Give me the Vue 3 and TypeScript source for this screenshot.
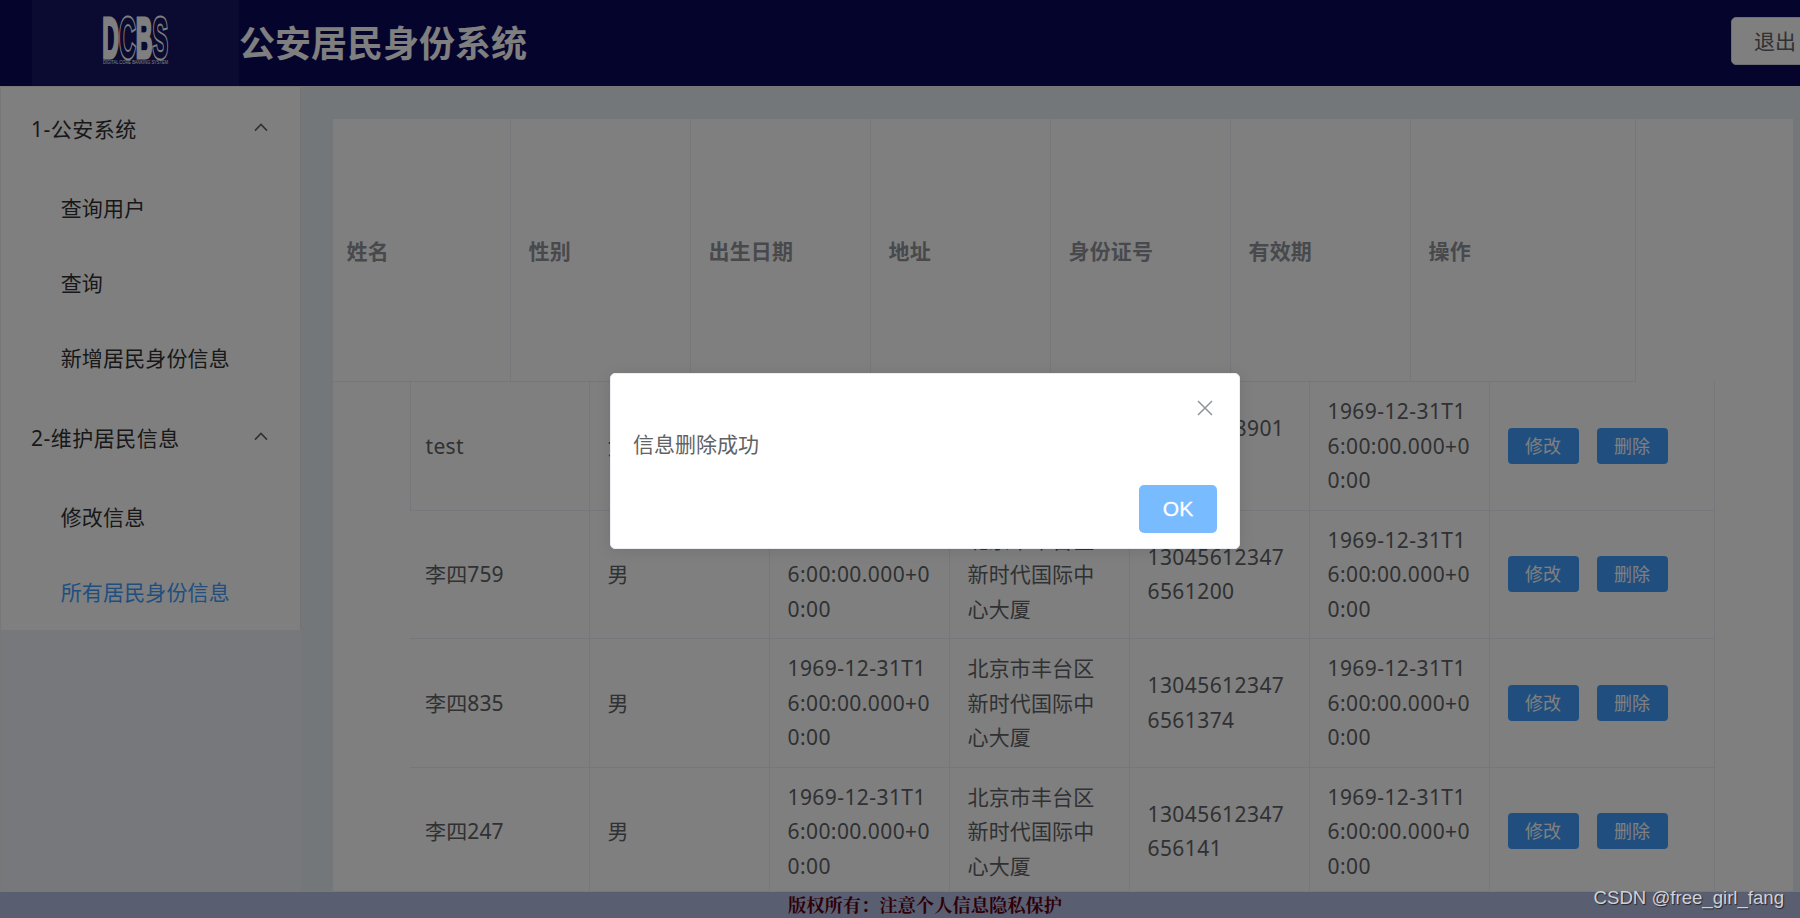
<script setup lang="ts">
interface MenuGroup {
  title: string
  items: string[]
}

interface Resident {
  name: string
  gender: string
  birth: string
  address: string
  idNumber: string
  expiry: string
}

interface Field {
  text: string
  numeric: boolean
}

const menu: MenuGroup[] = [
  { title: '1-公安系统', items: ['查询用户', '查询', '新增居民身份信息'] },
  { title: '2-维护居民信息', items: ['修改信息', '所有居民身份信息'] },
]
const activeItem = '所有居民身份信息'

const columns: string[] = ['姓名', '性别', '出生日期', '地址', '身份证号', '有效期', '操作']

const date = '1969-12-31T1\n6:00:00.000+0\n0:00'
const address = '北京市丰台区\n新时代国际中\n心大厦'

const residents: Resident[] = [
  { name: 'test', gender: '女', birth: date, address, idNumber: '13045678901\n123456', expiry: date },
  { name: '李四759', gender: '男', birth: date, address, idNumber: '13045612347\n6561200', expiry: date },
  { name: '李四835', gender: '男', birth: date, address, idNumber: '13045612347\n6561374', expiry: date },
  { name: '李四247', gender: '男', birth: date, address, idNumber: '13045612347\n656141', expiry: date },
]

const fieldsOf = (r: Resident): Field[] => [
  { text: r.name, numeric: false },
  { text: r.gender, numeric: false },
  { text: r.birth, numeric: true },
  { text: r.address, numeric: false },
  { text: r.idNumber, numeric: true },
  { text: r.expiry, numeric: true },
]
</script>

<template>
  <div class="viewport">
    <div class="page">
      <header class="topbar">
        <div class="logo">
          <svg width="70" height="52" viewBox="0 0 70 52">
            <text class="mark" transform="translate(0.2 43.6) scale(0.4 1)">
              <tspan class="solid">D</tspan><tspan class="outline">C</tspan><tspan class="solid">B</tspan><tspan class="outline">S</tspan>
            </text>
            <text class="tagline" x="1" y="50" textLength="65" lengthAdjust="spacingAndGlyphs">DIGITAL CORE BANKING SYSTEM</text>
          </svg>
        </div>
        <h1 class="title">公安居民身份系统</h1>
        <button class="logout">退出</button>
      </header>

      <div class="body">
        <aside class="aside">
          <nav class="menu">
            <section v-for="group in menu" :key="group.title">
              <div class="menu-title">
                <span class="menu-label">{{ group.title }}</span>
                <svg class="chevron" width="14" height="9" viewBox="0 0 14 9">
                  <path d="M1 7.6 L7 1.4 L13 7.6" />
                </svg>
              </div>
              <div
                v-for="item in group.items"
                :key="item"
                class="menu-item"
                :class="{ active: item === activeItem }"
              >
                {{ item }}
              </div>
            </section>
          </nav>
        </aside>

        <main class="main">
          <div class="panel">
            <div class="row head">
              <div v-for="column in columns" :key="column" class="cell">{{ column }}</div>
            </div>
            <div class="records">
              <div v-for="r in residents" :key="r.name" class="row">
                <div
                  v-for="(field, i) in fieldsOf(r)"
                  :key="i"
                  class="cell"
                  :class="{ numeric: field.numeric }"
                >{{ field.text }}</div>
                <div class="cell actions">
                  <button class="small-button">修改</button>
                  <button class="small-button">删除</button>
                </div>
              </div>
            </div>
          </div>
        </main>
      </div>

      <footer class="footer">版权所有：注意个人信息隐私保护</footer>

      <div class="mask">
        <div class="dialog">
          <svg class="close" width="16" height="16" viewBox="0 0 16 16">
            <path d="M1 1 L15 15 M15 1 L1 15" />
          </svg>
          <p class="message">信息删除成功</p>
          <button class="confirm">OK</button>
        </div>
      </div>
    </div>
    <div class="watermark">CSDN @free_girl_fang</div>
  </div>
</template>

<style>
body {
  margin: 0;
  overflow: hidden;
}
</style>

<style scoped>
.viewport {
  position: relative;
  width: 1800px;
  height: 918px;
  overflow: hidden;
  font-family: 'Noto Sans', 'Noto Sans CJK SC', sans-serif;
  font-size: 21px;
  font-weight: 400;
  color: #606266;
}

.page {
  position: relative;
  display: flex;
  flex-direction: column;
  width: 1850px;
  height: 918px;
}

button {
  box-sizing: border-box;
  margin: 0;
  padding: 0;
  border: 0;
  font-family: inherit;
}

.topbar {
  display: flex;
  flex: 0 0 86px;
  align-items: center;
  box-sizing: border-box;
  padding-left: 32px;
  background: #0b085a;
}

.logo {
  display: flex;
  align-items: center;
  box-sizing: border-box;
  width: 207px;
  height: 86px;
  padding: 0 0 6px 70px;
  background: #171460;
}

.logo svg {
  overflow: visible;
}

.mark {
  font-family: 'Liberation Sans', Arial, sans-serif;
  font-size: 58px;
  font-weight: 700;
  paint-order: stroke fill;
}

.solid {
  fill: #fff;
  stroke: #fff;
  stroke-width: 3px;
}

.outline {
  fill: #171460;
  stroke: #fff;
  stroke-width: 4px;
}

.tagline {
  font-family: 'Liberation Sans', Arial, sans-serif;
  font-size: 5px;
  fill: #fff;
}

.title {
  margin: 0 0 4px;
  font-family: 'Noto Sans CJK SC', sans-serif;
  font-size: 36px;
  font-weight: 700;
  line-height: 48px;
  color: #fff;
}

.logout {
  width: 88px;
  height: 48px;
  margin: 0 31px 4px auto;
  padding-bottom: 2px;
  border: 1px solid #dcdfe6;
  border-radius: 5px;
  background: #fff;
  font-size: 21px;
  color: #606266;
}

.body {
  display: flex;
  flex: 1;
  box-sizing: border-box;
  min-height: 0;
  border: 1px solid #eee;
  border-right: 0;
}

.aside {
  flex: 0 0 300px;
  background: #eef1f6;
}

.menu {
  box-sizing: border-box;
  border-right: 1px solid #e6e6e6;
  background: #fff;
  letter-spacing: 0.15px;
  color: #303133;
}

.menu-title {
  display: flex;
  align-items: center;
  justify-content: space-between;
  height: 84px;
  padding: 0 32px 0 30px;
}

.menu-label {
  margin-bottom: 2px;
  letter-spacing: 0.5px;
}

.chevron {
  margin-bottom: 3px;
}

.chevron path {
  fill: none;
  stroke: #606266;
  stroke-width: 1.6;
}

.menu-item {
  height: 75px;
  padding-left: 59.7px;
  line-height: 75px;
}

.menu-item.active {
  color: #409eff;
}

.main {
  flex: 1;
  box-sizing: border-box;
  min-width: 0;
  padding: 32px 57px 0 32px;
  overflow: hidden;
  background: #e9eef3;
}

.panel {
  height: 100%;
  overflow: hidden;
  background: #fff;
}

.row {
  display: grid;
  grid-template-columns: repeat(6, 180px) 225px;
  width: 1305px;
}

.cell {
  display: flex;
  align-items: center;
  box-sizing: border-box;
  padding: 12px 0 12px 17.5px;
  border-right: 1px solid #ebeef5;
  border-bottom: 1px solid #ebeef5;
  line-height: 34.5px;
  letter-spacing: 0.15px;
  white-space: pre;
}

.cell.numeric {
  letter-spacing: 0.42px;
}

.head {
  grid-template-columns: 178px repeat(5, 180px) 225px;
  width: 1303px;
  height: 263px;
  font-weight: 700;
  color: #909399;
}

.head .cell {
  padding-top: 14px;
}

.head .cell:first-child {
  padding-left: 13.5px;
}

.records {
  margin-left: 77px;
}

.records .cell:first-child {
  padding-left: 15px;
}

.records .row:first-child .cell:first-child {
  padding-left: 14.5px;
  border-left: 1px solid #ebeef5;
  letter-spacing: 0.3px;
}

.actions {
  gap: 18px;
}

.small-button {
  width: 71px;
  height: 36px;
  padding-bottom: 2px;
  border-radius: 4px;
  background: #409eff;
  font-size: 18px;
  color: #fff;
}

.footer {
  flex: 0 0 26px;
  min-height: 0;
  overflow: hidden;
  background: #b4bce2;
  font-family: 'Liberation Serif', 'Noto Serif CJK SC', 'Noto Sans CJK SC', serif;
  font-size: 18.3px;
  font-weight: 700;
  line-height: 28px;
  text-align: center;
  color: #5c0010;
}

.mask {
  position: absolute;
  inset: 0;
  display: flex;
  align-items: center;
  justify-content: center;
  background: rgba(0, 0, 0, 0.5);
}

.dialog {
  position: relative;
  display: flex;
  flex-direction: column;
  box-sizing: border-box;
  width: 630px;
  height: 176px;
  margin-top: 4px;
  padding: 55px 23px 16px 22px;
  border: 1px solid #ebeef5;
  border-radius: 5px;
  background: #fff;
  box-shadow: 0 2px 15px rgba(0, 0, 0, 0.1);
}

.close {
  position: absolute;
  top: 26px;
  right: 26px;
}

.close path {
  fill: none;
  stroke: #909399;
  stroke-width: 1.5;
}

.message {
  margin: 0;
  line-height: 30px;
}

.confirm {
  width: 78px;
  height: 48px;
  margin: auto -1px -1px auto;
  border-radius: 5px;
  background: #79bbff;
  font-family: 'Liberation Sans', Arial, sans-serif;
  font-size: 21px;
  font-weight: 500;
  color: #fff;
  -webkit-text-stroke: 0.3px #fff;
}

.watermark {
  position: absolute;
  right: 16px;
  bottom: 8px;
  font-family: 'Liberation Sans', Arial, sans-serif;
  font-size: 18.6px;
  line-height: 24px;
  color: #d0d1d6;
  text-shadow: 1px 1px 1px rgba(0, 0, 0, 0.6);
}
</style>
